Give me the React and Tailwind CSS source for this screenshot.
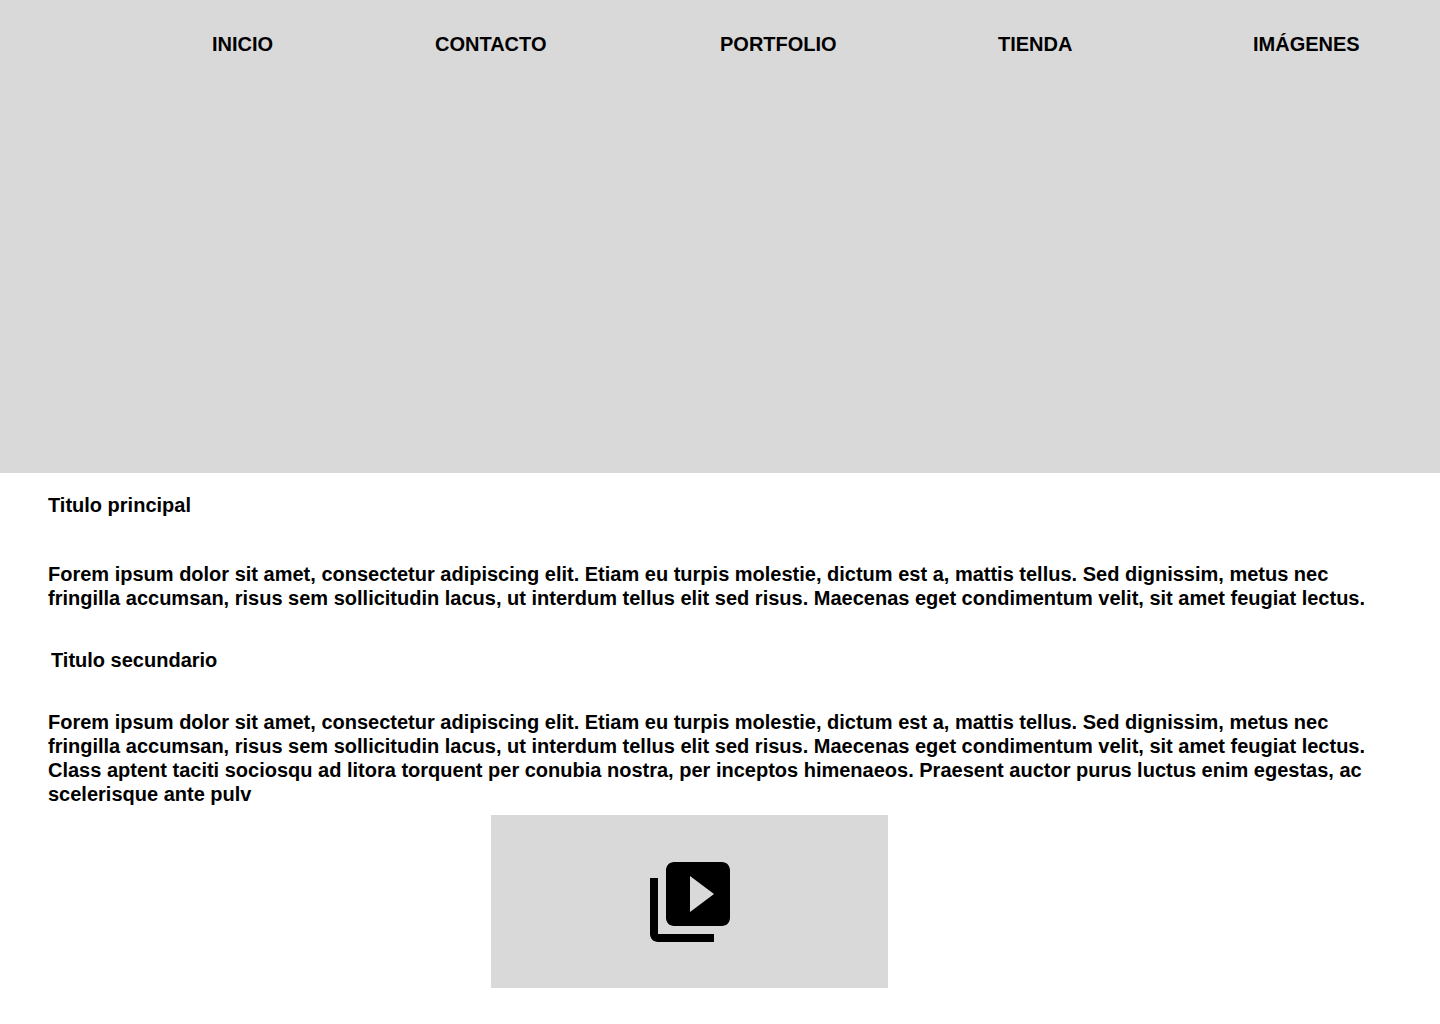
import React from "react";

const links = ["INICIO", "CONTACTO", "PORTFOLIO", "TIENDA", "IMÁGENES"];

export default function App() {
  return (
    <div className="bg-white pb-9 font-['Liberation_Sans',Arial,sans-serif] text-xl leading-6 font-bold text-black">
      <header className="min-h-[473px] bg-[#d9d9d9] pt-8">
        <nav aria-label="Principal">
          <ul className="grid grid-cols-[212fr_223fr_285fr_278fr_255fr_187fr]">
            {links.map((label) => (
              <li key={label} className="first:col-start-2">
                <a href="#">{label}</a>
              </li>
            ))}
          </ul>
        </nav>
      </header>
      <main className="px-12 pt-5">
        <h1>Titulo principal</h1>
        <p className="mt-[45px]">
          Forem ipsum dolor sit amet, consectetur adipiscing elit. Etiam eu turpis molestie, dictum est a, mattis tellus. Sed dignissim, metus nec fringilla accumsan, risus sem sollicitudin lacus, ut interdum tellus elit sed risus. Maecenas eget condimentum velit, sit amet feugiat lectus.
        </p>
        <h2 className="mt-[38px] pl-[3px]">Titulo secundario</h2>
        <p className="mt-[38px]">
          Forem ipsum dolor sit amet, consectetur adipiscing elit. Etiam eu turpis molestie, dictum est a, mattis tellus. Sed dignissim, metus nec fringilla accumsan, risus sem sollicitudin lacus, ut interdum tellus elit sed risus. Maecenas eget condimentum velit, sit amet feugiat lectus. Class aptent taciti sociosqu ad litora torquent per conubia nostra, per inceptos himenaeos. Praesent auctor purus luctus enim egestas, ac scelerisque ante pulv
        </p>
        <button
          type="button"
          aria-label="Reproducir vídeo"
          className="mt-[9px] ml-[443px] flex h-[173px] w-[397px] items-center justify-center bg-[#d9d9d9]"
        >
          <svg viewBox="0 0 24 24" className="size-24" fill="currentColor" aria-hidden="true">
            <path d="M4 6H2v14c0 1.100.9 2 2 2h14v-2H4V6zm16-4H8c-1.100 0-2 .9-2 2v12c0 1.100.9 2 2 2h12c1.100 0 2-.9 2-2V4c0-1.100-.9-2-2-2zm-8 12.500v-9l6 4.500-6 4.500z" />
          </svg>
        </button>
      </main>
    </div>
  );
}
